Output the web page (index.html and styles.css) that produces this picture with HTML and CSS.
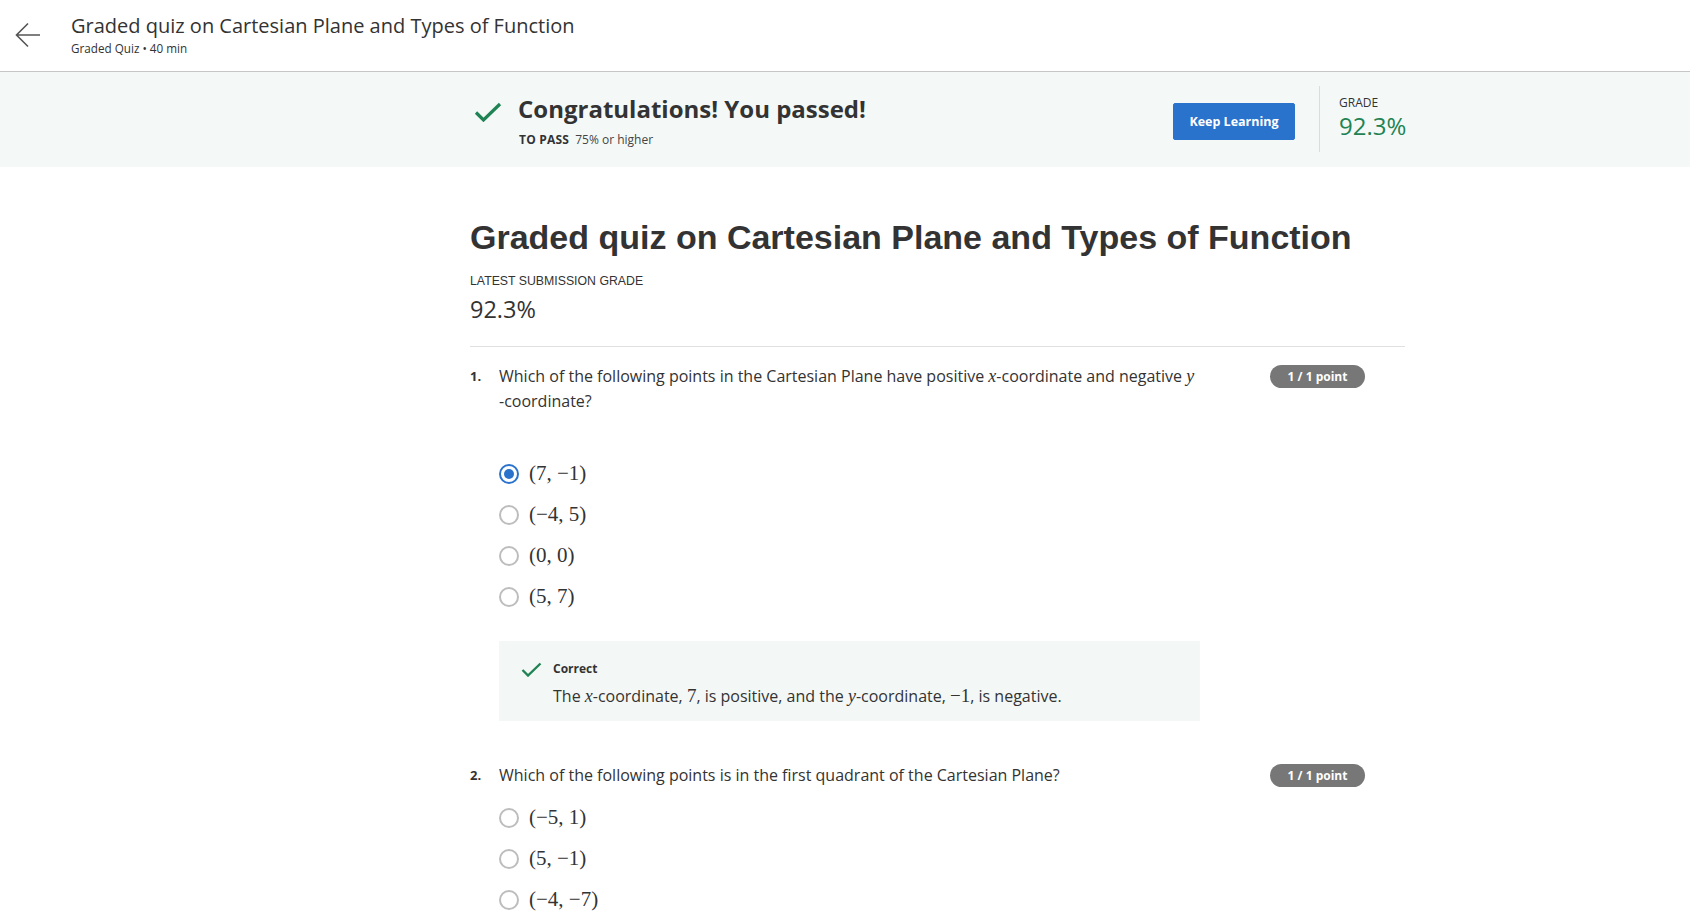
FILE: index.html
```html
<!DOCTYPE html>
<html lang="en">
<head>
<meta charset="utf-8">
<title>Graded quiz on Cartesian Plane and Types of Function</title>
<link rel="stylesheet" href="styles.css">
</head>
<body>
<header class="topbar">
  <button class="back" aria-label="Back">
    <svg width="26" height="26" viewBox="0 0 26 26"><path d="M25 13H2M13 1.5L1.5 13 13 24.5" fill="none" stroke="#555" stroke-width="1.6"/></svg>
  </button>
  <div class="titles">
    <div class="ttl">Graded quiz on Cartesian Plane and Types of Function</div>
    <div class="sub">Graded Quiz • 40 min</div>
  </div>
</header>

<section class="banner">
  <div class="wrap banner-inner">
    <svg class="bcheck" width="28" height="20" viewBox="0 0 28 20"><path d="M2 10.5l7.5 7.5L26 2" fill="none" stroke="#1f8354" stroke-width="3.2"/></svg>
    <div class="pass">
      <div class="congrats">Congratulations! You passed!</div>
      <div class="topass"><span class="tp">TO PASS</span> 75% or higher</div>
    </div>
    <button class="keep">Keep Learning</button>
    <div class="vdiv"></div>
    <div class="grade">
      <div class="glabel">GRADE</div>
      <div class="gval">92.3%</div>
    </div>
  </div>
</section>

<main class="wrap content">
  <h1 class="qtitle">Graded quiz on Cartesian Plane and Types of Function</h1>
  <div class="latest-label">LATEST SUBMISSION GRADE</div>
  <div class="latest-val">92.3%</div>
  <hr class="rule">

  <div class="question">
    <div class="qhead">
      <span class="qnum">1.</span>
      <div class="qtext">Which of the following points in the Cartesian Plane have positive <i class="mi">x</i>-coordinate and negative <i class="mi">y</i> <span class="nowrap">-coordinate?</span></div>
      <span class="badge">1 / 1 point</span>
    </div>
    <div class="options first">
      <div class="opt"><span class="radio checked"></span><span class="math">(7, −1)</span></div>
      <div class="opt"><span class="radio"></span><span class="math">(−4, 5)</span></div>
      <div class="opt"><span class="radio"></span><span class="math">(0, 0)</span></div>
      <div class="opt"><span class="radio"></span><span class="math">(5, 7)</span></div>
    </div>
    <div class="feedback">
      <svg class="fcheck" width="21" height="15" viewBox="0 0 21 15"><path d="M1.5 8l5.5 5.5L19.5 1.5" fill="none" stroke="#1f8354" stroke-width="2.4"/></svg>
      <div class="fbody">
        <div class="fhead">Correct</div>
        <div class="ftext">The <i class="mi">x</i>-coordinate, <span class="mn">7</span>, is positive, and the <i class="mi">y</i>-coordinate, <span class="mn">−1</span>, is negative.</div>
      </div>
    </div>
  </div>

  <div class="question q2">
    <div class="qhead">
      <span class="qnum">2.</span>
      <div class="qtext">Which of the following points is in the first quadrant of the Cartesian Plane?</div>
      <span class="badge">1 / 1 point</span>
    </div>
    <div class="options">
      <div class="opt"><span class="radio"></span><span class="math">(−5, 1)</span></div>
      <div class="opt"><span class="radio"></span><span class="math">(5, −1)</span></div>
      <div class="opt"><span class="radio"></span><span class="math">(−4, −7)</span></div>
    </div>
  </div>
</main>
</body>
</html>
```
FILE: styles.css
```css
* { box-sizing: border-box; }
html, body { margin: 0; padding: 0; }
body {
  font-family: "Open Sans", "Noto Sans", sans-serif;
  color: #1f1f1f;
  background: #fff;
  overflow: hidden;
}

.topbar {
  display: flex;
  height: 72px;
  border-bottom: 1px solid #c6c6c6;
  padding-left: 15px;
}
.back {
  width: 26px;
  height: 26px;
  margin-top: 22px;
  padding: 0;
  border: 0;
  background: none;
}
.titles { margin-left: 30px; padding-top: 12px; }
.ttl { font-size: 20px; line-height: 28px; color: #333; }
.sub { font-size: 11.7px; line-height: 16px; color: #333; }

.banner { background: #f4f9f8; height: 95px; }
.wrap { margin-left: 470px; width: 935px; }
.banner-inner { display: flex; align-items: flex-start; padding-left: 4px; height: 95px; }
.bcheck { margin-top: 30px; flex: none; }
.pass { margin-left: 16px; padding-top: 21px; }
.congrats { font-size: 24px; line-height: 32px; font-weight: 700; color: #333; }
.topass { margin-top: 7px; font-size: 12px; line-height: 16px; color: #444; padding-left: 1px; }
.tp { font-weight: 700; color: #333; margin-right: 3px; letter-spacing: 0.2px; }
.keep {
  margin-left: auto;
  margin-top: 31px;
  width: 122px;
  height: 37px;
  background: #2a73cc;
  border: 1px solid #2a73cc;
  border-radius: 2px;
  color: #fff;
  font-family: "Open Sans", sans-serif;
  font-weight: 700;
  font-size: 12.5px;
  padding: 0;
}
.vdiv { width: 1px; height: 66px; background: #dcdcdc; margin-top: 14px; margin-left: 24px; }
.grade { margin-left: 19px; margin-top: 23px; width: 66px; }
.glabel { font-size: 12px; line-height: 16px; color: #333; }
.gval { font-size: 24px; line-height: 30px; color: #1f8354; }

.content { padding-bottom: 40px; }
.qtitle {
  margin: 50px 0 0;
  font-family: "Liberation Sans", Arial, sans-serif;
  font-weight: 700;
  font-size: 34px;
  line-height: 40px;
  color: #333;
}
.latest-label {
  margin-top: 16px;
  font-family: "Liberation Sans", Arial, sans-serif;
  font-size: 12.3px;
  line-height: 16px;
  color: #333;
}
.latest-val {
  margin-top: 6px;
  font-size: 23.5px;
  line-height: 28px;
  color: #333;
}
.rule { margin: 23px 0 0; border: 0; border-top: 1px solid #e0e0e0; }

.question { padding-top: 17px; }
.q2 { padding-top: 42px; }
.qhead { display: flex; align-items: flex-start; }
.qnum { width: 29px; flex: none; font-size: 13px; font-weight: 700; line-height: 25px; color: #333; }
.qtext { width: 715px; font-size: 16px; line-height: 25px; color: #333; }
.nowrap { white-space: nowrap; }
.badge {
  margin-left: auto;
  margin-right: 40px;
  margin-top: 1px;
  width: 95px;
  height: 23px;
  border-radius: 12px;
  background: #777;
  color: #fff;
  font-size: 12px;
  font-weight: 700;
  line-height: 23px;
  text-align: center;
}
.mi { font-family: "Liberation Serif", "DejaVu Serif", serif; font-style: italic; font-size: 18px; line-height: 1; }
.mn { font-family: "Liberation Serif", "DejaVu Serif", serif; font-size: 19px; line-height: 1; }

.options { margin-left: 29px; margin-top: 9px; }
.options.first { margin-top: 39px; }
.opt { display: flex; align-items: center; height: 41px; }
.radio {
  width: 20px;
  height: 20px;
  border-radius: 50%;
  border: 2px solid #bdbdbd;
  flex: none;
  position: relative;
}
.radio.checked { border-color: #2a73cc; }
.radio.checked::after {
  content: "";
  position: absolute;
  left: 3px;
  top: 3px;
  width: 10px;
  height: 10px;
  border-radius: 50%;
  background: #2a73cc;
}
.math {
  margin-left: 10px;
  font-family: "Liberation Serif", "DejaVu Serif", serif;
  font-size: 21px;
  color: #333;
}

.feedback {
  margin-left: 29px;
  margin-top: 24px;
  width: 701px;
  height: 80px;
  background: #f3f8f6;
  display: flex;
  align-items: flex-start;
  padding: 20px 0 0 22px;
}
.fcheck { margin-top: 1px; flex: none; }
.fbody { margin-left: 11px; }
.fhead { font-size: 12px; font-weight: 700; line-height: 16px; color: #333; }
.ftext { margin-top: 8px; font-size: 16px; line-height: 22px; color: #333; }
```
